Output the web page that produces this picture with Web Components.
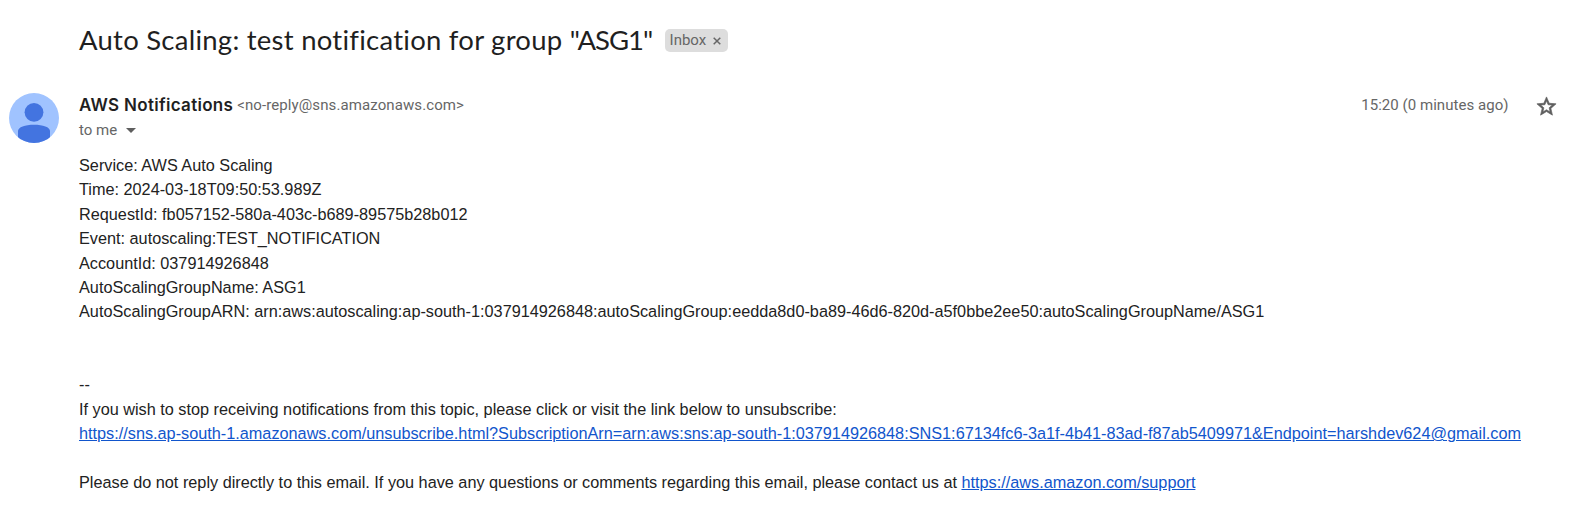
<!DOCTYPE html>
<html lang="en">
<head>
<meta charset="utf-8">
<title>Auto Scaling: test notification for group "ASG1"</title>
<style>
body { margin: 0; background: #fff; }
.name { letter-spacing: -1px; }
</style>
</head>
<body>
<mail-thread>
  <mail-subject slot="subject">Auto Scaling: test notification for group <span class="name">"ASG1"</span><label-chip slot="labels">Inbox</label-chip></mail-subject>
  <user-avatar slot="avatar"></user-avatar>
  <mail-header slot="header">
    <span slot="sender">AWS Notifications</span>
    <span slot="address">&lt;no-reply@sns.amazonaws.com&gt;</span>
    <span slot="date">15:20 (0 minutes ago)</span>
    <span slot="recipient">to me</span>
  </mail-header>
  <mail-body slot="body">
    <mail-line>Service: AWS Auto Scaling</mail-line>
    <mail-line>Time: 2024-03-18T09:50:53.989Z</mail-line>
    <mail-line>RequestId: fb057152-580a-403c-b689-89575b28b012</mail-line>
    <mail-line>Event: autoscaling:TEST_NOTIFICATION</mail-line>
    <mail-line>AccountId: 037914926848</mail-line>
    <mail-line>AutoScalingGroupName: ASG1</mail-line>
    <mail-line>AutoScalingGroupARN: arn:aws:autoscaling:ap-south-1:037914926848:autoScalingGroup:eedda8d0-ba89-46d6-820d-a5f0bbe2ee50:autoScalingGroupName/ASG1</mail-line>
    <mail-line></mail-line>
    <mail-line></mail-line>
    <mail-line>--</mail-line>
    <mail-line>If you wish to stop receiving notifications from this topic, please click or visit the link below to unsubscribe:</mail-line>
    <mail-line><mail-link>https://sns.ap-south-1.amazonaws.com/unsubscribe.html?SubscriptionArn=arn:aws:sns:ap-south-1:037914926848:SNS1:67134fc6-3a1f-4b41-83ad-f87ab5409971&amp;Endpoint=harshdev624@gmail.com</mail-link></mail-line>
    <mail-line></mail-line>
    <mail-line>Please do not reply directly to this email. If you have any questions or comments regarding this email, please contact us at <mail-link>https://aws.amazon.com/support</mail-link></mail-line>
  </mail-body>
</mail-thread>
<script>
const define = (name, html) => customElements.define(name, class extends HTMLElement {
  constructor() {
    super();
    this.attachShadow({ mode: 'open' }).innerHTML = html;
  }
});

define('mail-thread', `
<style>
  :host { display: grid; grid-template-columns: 70px 1fr; grid-template-rows: 93px 60.1px auto; padding-left: 9px; box-sizing: border-box; height: 514px; overflow: hidden; font-family: Roboto, sans-serif; }
  .subject, .body { grid-column: 2; }
</style>
<div class="subject"><slot name="subject"></slot></div>
<div><slot name="avatar"></slot></div>
<div><slot name="header"></slot></div>
<div class="body"><slot name="body"></slot></div>`);

define('mail-subject', `
<style>
  :host { display: flex; align-items: flex-start; padding-top: 23px; gap: 12.4px; }
  h1 { margin: 0; font: 400 27.5px/33px Lato, sans-serif; letter-spacing: .25px; color: #1f1f1f; white-space: nowrap; }
  .labels { padding-top: 6px; }
</style>
<h1><slot></slot></h1><div class="labels"><slot name="labels"></slot></div>`);

define('label-chip', `
<style>
  :host { display: flex; box-sizing: border-box; width: 63px; height: 23px; padding-left: 5px; border-radius: 5px; background: #ddd; color: #666; font: 400 15px/22px Roboto, sans-serif; align-items: flex-start; gap: 7px; }
  svg { margin-top: 8px; flex: none; }
</style>
<slot></slot><svg width="8" height="8" viewBox="0 0 8 8"><path d="M.7.7 7.3 7.3M7.3.7.7 7.3" stroke="#666" stroke-width="1.5"/></svg>`);

define('user-avatar', `
<style>:host { display: block; width: 50px; height: 50px; } svg { display: block; }</style>
<svg width="50" height="50" viewBox="0 0 50 50">
  <clipPath id="c"><circle cx="25" cy="25" r="25"/></clipPath>
  <g clip-path="url(#c)"><path fill="#a0c3ff" d="M0 0h50v50H0z"/>
  <g fill="#4374e0"><circle cx="25" cy="19.3" r="9.4"/><path d="M9 50V38C9 34 16 31.7 25 31.7s16 2.3 16 6.3V50z"/></g></g>
</svg>`);

define('mail-header', `
<style>
  :host { display: block; color: #666; font: 400 15px/20px Roboto, sans-serif; white-space: nowrap; }
  .top { display: flex; align-items: flex-start; height: 27px; }
  .sender { font: 600 17px/24px Inter, sans-serif; letter-spacing: .3px; color: #1f1f1f; margin-right: 4px; }
  .address, .date { padding-top: 2px; }
  .address { letter-spacing: .1px; flex: 1; }
  .date { margin-right: 26px; letter-spacing: .04px; }
  .star { display: block; margin: 1.5px 21.5px 0 0; }
  .to { display: flex; align-items: center; gap: 8.5px; }
</style>
<div class="top">
  <div class="sender"><slot name="sender"></slot></div>
  <div class="address"><slot name="address"></slot></div>
  <div class="date"><slot name="date"></slot></div>
  <svg class="star" width="23" height="23" viewBox="0 0 24 24"><path fill="#5e5e5e" stroke="#5e5e5e" stroke-width=".7" d="M22 9.24l-7.19-.62L12 2 9.19 8.63 2 9.24l5.46 4.73L5.82 21 12 17.27 18.18 21l-1.63-7.03L22 9.24zM12 15.4l-3.76 2.27 1-4.28-3.32-2.88 4.38-.38L12 6.1l1.71 4.04 4.38.38-3.32 2.88 1 4.28L12 15.4z"/></svg>
</div>
<div class="to"><slot name="recipient"></slot><svg width="10" height="5" viewBox="0 0 10 5"><path fill="#5e5e5e" d="M0 0h10L5 5z"/></svg></div>`);

define('mail-body', `
<style>:host { display: block; font: 400 16.25px/24.375px "Liberation Sans", Arial, sans-serif; color: #222; white-space: nowrap; }</style>
<slot></slot>`);

define('mail-line', `<style>:host { display: block; height: 24.375px; }</style><slot></slot>`);

define('mail-link', `<style>:host { display: inline; } a { color: #15c; text-decoration: underline; }</style><a href="#"><slot></slot></a>`);
</script>
</body>
</html>
